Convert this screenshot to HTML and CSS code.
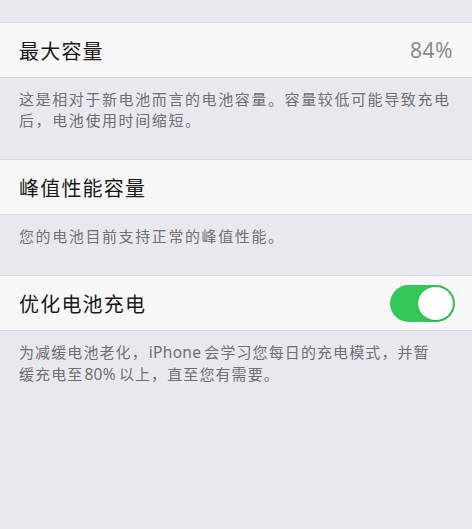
FILE: index.html
```html
<!DOCTYPE html>
<html lang="zh-CN">
<head>
  <meta charset="UTF-8">
  <meta name="viewport" content="width=device-width, initial-scale=1.0">
  <title>电池健康</title>
  <link rel="stylesheet" href="styles.css">
</head>
<body>
  <div class="settings">
    <div class="group">
      <div class="row">
        <span class="row-title">最大容量</span>
        <span class="row-value">84%</span>
      </div>
      <p class="footnote">这是相对于新电池而言的电池容量。容量较低可能导致充电<br>后，电池使用时间缩短。</p>
    </div>

    <div class="group">
      <div class="row">
        <span class="row-title">峰值性能容量</span>
      </div>
      <p class="footnote">您的电池目前支持正常的峰值性能。</p>
    </div>

    <div class="group">
      <div class="row">
        <span class="row-title">优化电池充电</span>
        <span class="switch on"><span class="knob"></span></span>
      </div>
      <p class="footnote tight">为减缓电池老化，<span class="latin">iPhone</span>会学习您每日的充电模式，并暂<br>缓充电至<span class="latin">80%</span>以上，直至您有需要。</p>
    </div>
  </div>
</body>
</html>
```

FILE: styles.css
```css
* {
  box-sizing: border-box;
}
body {
  margin: 0;
  background-color: #e9e8ee;
  font-family: 'Noto Sans CJK SC', 'Noto Sans', sans-serif;
  height: 529px;
  overflow: hidden;
}
.settings {
  padding-top: 22px;
}
.group {
  margin-bottom: 29px;
}
.row {
  display: flex;
  align-items: center;
  justify-content: space-between;
  height: 56px;
  padding: 0 19px;
  background-color: #f8f8f8;
  border-top: 1px solid #d9d9dd;
  border-bottom: 1px solid #d9d9dd;
}
.row-title {
  font-size: 20px;
  letter-spacing: 1.2px;
  color: #1a1a1c;
}
.row-value {
  font-family: 'Noto Sans', sans-serif;
  font-size: 21px;
  letter-spacing: 0.5px;
  color: #8a8a8e;
}
.footnote {
  margin: 0;
  padding: 10px 19px 0;
  font-size: 15px;
  line-height: 21px;
  letter-spacing: 1.6px;
  color: #6f6f74;
}
.footnote.tight {
  letter-spacing: 1.1px;
}
.footnote .latin {
  font-family: 'Noto Sans', sans-serif;
  font-size: 15.5px;
  letter-spacing: 0.3px;
  margin: 0 3px 0 1px;
}
.switch {
  display: flex;
  align-items: center;
  justify-content: flex-end;
  width: 65px;
  height: 37px;
  padding: 2px;
  border-radius: 19px;
  background-color: #34c759;
  margin-right: -2px;
}
.knob {
  width: 35px;
  height: 33px;
  border-radius: 50%;
  background-color: #fff;
  box-shadow: 0 1px 3px rgba(0, 0, 0, 0.15);
}
```
